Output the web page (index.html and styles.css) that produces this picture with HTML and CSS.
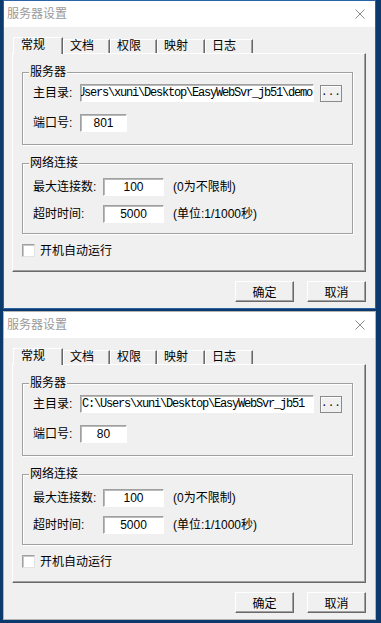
FILE: index.html
```html
<!DOCTYPE html>
<html lang="zh-CN">
<head>
    <meta charset="UTF-8">
    <meta name="viewport" content="width=device-width, initial-scale=1.0">
    <title>服务器设置</title>
    <link rel="stylesheet" href="styles.css">
</head>
<body>

<div class="window active">
    <div class="titlebar">
        <span class="title">服务器设置</span>
        <svg class="close" viewBox="0 0 10 10"><path d="M0.5 0.5L9.5 9.5M9.5 0.5L0.5 9.5"/></svg>
    </div>
    <div class="client">
        <div class="tabs">
            <div class="tab selected">常规</div>
            <div class="tab w47">文档</div>
            <div class="tab w47">权限</div>
            <div class="tab w48">映射</div>
            <div class="tab w48">日志</div>
        </div>
        <div class="panel">
            <fieldset class="group server">
                <legend>服务器</legend>
                <div class="row">
                    <span class="lbl">主目录:</span>
                    <div class="field path scrolled"><span>C:\Users\xuni\Desktop\EasyWebSvr_jb51\demo</span></div>
                    <button class="browse">...</button>
                </div>
                <div class="row">
                    <span class="lbl">端口号:</span>
                    <div class="field port">801</div>
                </div>
            </fieldset>
            <fieldset class="group net">
                <legend>网络连接</legend>
                <div class="row">
                    <span class="lbl">最大连接数:</span>
                    <div class="field num">100</div>
                    <span class="hint">(0为不限制)</span>
                </div>
                <div class="row">
                    <span class="lbl">超时时间:</span>
                    <div class="field num">5000</div>
                    <span class="hint">(单位:1/1000秒)</span>
                </div>
            </fieldset>
            <div class="check-row">
                <span class="check"></span>
                <span>开机自动运行</span>
            </div>
        </div>
        <div class="buttons">
            <button class="btn">确定</button>
            <button class="btn">取消</button>
        </div>
    </div>
</div>

<div class="window">
    <div class="titlebar">
        <span class="title">服务器设置</span>
        <svg class="close" viewBox="0 0 10 10"><path d="M0.5 0.5L9.5 9.5M9.5 0.5L0.5 9.5"/></svg>
    </div>
    <div class="client">
        <div class="tabs">
            <div class="tab selected">常规</div>
            <div class="tab w47">文档</div>
            <div class="tab w47">权限</div>
            <div class="tab w48">映射</div>
            <div class="tab w48">日志</div>
        </div>
        <div class="panel">
            <fieldset class="group server">
                <legend>服务器</legend>
                <div class="row">
                    <span class="lbl">主目录:</span>
                    <div class="field path"><span>C:\Users\xuni\Desktop\EasyWebSvr_jb51</span></div>
                    <button class="browse">...</button>
                </div>
                <div class="row">
                    <span class="lbl">端口号:</span>
                    <div class="field port">80</div>
                </div>
            </fieldset>
            <fieldset class="group net">
                <legend>网络连接</legend>
                <div class="row">
                    <span class="lbl">最大连接数:</span>
                    <div class="field num">100</div>
                    <span class="hint">(0为不限制)</span>
                </div>
                <div class="row">
                    <span class="lbl">超时时间:</span>
                    <div class="field num">5000</div>
                    <span class="hint">(单位:1/1000秒)</span>
                </div>
            </fieldset>
            <div class="check-row">
                <span class="check"></span>
                <span>开机自动运行</span>
            </div>
        </div>
        <div class="buttons">
            <button class="btn">确定</button>
            <button class="btn">取消</button>
        </div>
    </div>
</div>

</body>
</html>
```

FILE: styles.css
```css
* { box-sizing: border-box; }
body {
    margin: 0;
    width: 381px;
    height: 623px;
    overflow: hidden;
    padding-left: 3px;
    background-color: #0d3a6c;
    font-family: "Liberation Sans", "Noto Sans CJK SC", sans-serif;
    font-size: 12px;
    color: #000;
}
.window { width: 373px; border: 1px solid #b4b4b4; background-color: #f0f0f0; }
.window.active { border-color: #2b64a6; }
.window + .window { margin-top: 2px; }

.titlebar {
    height: 26px;
    background-color: #fff;
    display: flex;
    align-items: center;
    justify-content: space-between;
    padding: 0 10px 0 3px;
}
.title { color: #9a9a9a; line-height: 16px; }
.close { width: 10px; height: 10px; stroke: #8c8c8c; stroke-width: 1; fill: none; }

.client { padding: 10px 0 6px 0; }

.tabs { display: flex; align-items: flex-end; height: 16px; padding-left: 9px; }
.tab {
    height: 14px;
    line-height: 13px;
    padding-left: 6px;
    border-top: 1px solid #fff;
    border-left: 1px solid #fff;
    border-right: 1px solid #696969;
    box-shadow: inset -1px 0 0 #a0a0a0;
}
.tab.w47 { width: 47px; }
.tab.w48 { width: 48px; }
.tab.selected {
    width: 50px;
    height: 17px;
    line-height: 14px;
    padding-left: 7px;
    margin-bottom: -1px;
    position: relative;
    z-index: 1;
    background-color: #f0f0f0;
}

.panel {
    margin: 0 9px 0 8px;
    border: 1px solid;
    border-color: #fff #696969 #696969 #fff;
    box-shadow: inset -1px -1px 0 #a0a0a0;
    padding: 10px 12px 14px 9px;
}

.group {
    margin: 0;
    min-width: 0;
    padding: 4px 10px 12px 10px;
    border: 1px solid #a0a0a0;
    box-shadow: 1px 1px 0 #fff, inset 1px 1px 0 #fff;
}
.group legend {
    margin-left: -4px;
    padding: 0 1px;
    line-height: 16px;
    background-color: #f0f0f0;
}
.group.net { margin-top: 10px; padding: 7px 10px 10px 10px; }

.row { display: flex; align-items: center; height: 18px; }
.row + .row { margin-top: 12px; }
.net .row + .row { margin-top: 9px; }
.lbl { line-height: 16px; }
.server .lbl { width: 47px; }
.net .lbl { width: 70px; }

.field {
    height: 18px;
    background-color: #fff;
    border: 1px solid;
    border-color: #a0a0a0 #fff #fff #a0a0a0;
    box-shadow: inset 1px 1px 0 #b9b9b9;
    line-height: 16px;
    white-space: nowrap;
    overflow: hidden;
}
.path {
    width: 234px;
    display: flex;
    padding: 0 1px 0 1px;
    font-family: "Liberation Mono", monospace;
    font-size: 12px;
    letter-spacing: -1.2px;
}
.path.scrolled { justify-content: flex-end; }
.port { width: 47px; text-align: center; }
.num { width: 61px; text-align: center; }
.hint { margin-left: 9px; line-height: 16px; }

.browse {
    width: 22px;
    height: 17px;
    margin-left: 6px;
    padding: 0 0 2px 0;
    background-color: #f0f0f0;
    border: 1px solid #8a8a8a;
    box-shadow: inset 1px 1px 0 #fff;
    font-family: "Liberation Mono", monospace;
    font-size: 11px;
    line-height: 12px;
    color: #000;
}

.check-row { display: flex; align-items: center; gap: 5px; margin-top: 10px; height: 13px; line-height: 16px; }
.check {
    width: 13px;
    height: 13px;
    background-color: #fff;
    border: 1px solid;
    border-color: #a0a0a0 #e3e3e3 #e3e3e3 #a0a0a0;
    box-shadow: inset 1px 1px 0 #c8c8c8;
}

.buttons { display: flex; justify-content: flex-end; gap: 13px; margin-top: 9px; padding-right: 9px; }
.btn {
    width: 59px;
    height: 21px;
    padding: 0;
    background-color: #f0f0f0;
    border: 1px solid;
    border-color: #fff #696969 #696969 #fff;
    box-shadow: inset -1px -1px 0 #a0a0a0;
    font-family: "Liberation Sans", "Noto Sans CJK SC", sans-serif;
    font-size: 12px;
    color: #000;
}
```
